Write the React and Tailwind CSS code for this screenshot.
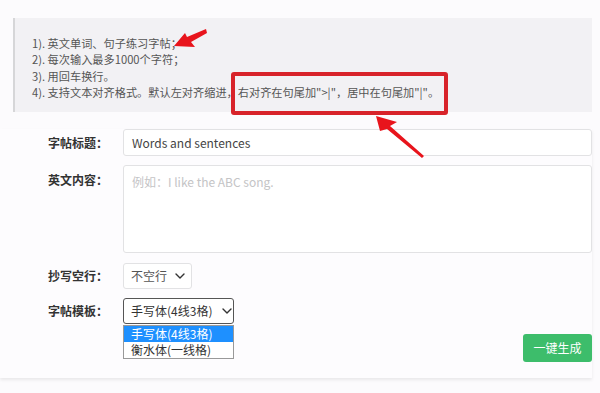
import React from "react";

const tips = [
  "1). 英文单词、句子练习字帖；",
  "2). 每次输入最多1000个字符；",
  "3). 用回车换行。",
];

function Chevron({ className }) {
  return (
    <svg className={className} width="10" height="6" viewBox="0 0 10 6" fill="none">
      <path d="M1 1l4 4 4-4" stroke="#333" strokeWidth="1.4" strokeLinecap="round" strokeLinejoin="round" />
    </svg>
  );
}

function Label({ children, top }) {
  return (
    <div className={"w-[108px] shrink-0 text-right text-[12px] font-bold text-[#333] " + (top ? "pt-[6px]" : "")}>
      {children}
    </div>
  );
}

export default function App() {
  return (
    <div className="relative w-[600px] h-[393px] overflow-hidden bg-[#fcfbfd] font-['Noto_Sans_CJK_SC',sans-serif]">
      <div className="pt-[18px] pl-[13px] pr-[8px]">
        <div className="h-[94px] border-l-2 border-[#d6d6d8] bg-[#f2f1f4] pl-[17px] pt-[17px] text-[11.2px] leading-[16.3px] text-[#555]">
          {tips.map((t) => (
            <div key={t}>{t}</div>
          ))}
          <div>
            4). 支持文本对齐格式。默认左对齐缩进，
            <span className="relative">
              右对齐在句尾加"&gt;|"，居中在句尾加"|"。
              <span className="absolute left-[-7px] right-[-9px] top-[-12px] bottom-[-15px] rounded-[3px] border-[4px] border-[#d8232a]" />
            </span>
          </div>
        </div>
      </div>

      <div className="mt-[17px] mr-[8px] pb-[16px] shadow-[0_2px_3px_rgba(0,0,0,0.08)] bg-[#fdfcfe]">
        <div className="flex flex-col gap-[9px]">
          <div className="flex items-center gap-[15px]">
            <Label>字帖标题：</Label>
            <div className="flex-1 h-[27px] rounded-[3px] border border-[#e2e2e4] bg-white px-[8px] flex items-center text-[12px] text-[#444]">
              Words and sentences
            </div>
          </div>
          <div className="flex gap-[15px]">
            <Label top>英文内容：</Label>
            <div className="flex-1 h-[88px] rounded-[3px] border border-[#e2e2e4] bg-white px-[8px] pt-[7px] text-[12px] text-[#c4c4c6]">
              例如：I like the ABC song.
            </div>
          </div>
          <div className="flex items-center gap-[15px] mt-[1px]">
            <Label>抄写空行：</Label>
            <div className="w-[69px] h-[26px] rounded-[3px] border border-[#e2e2e4] bg-white pl-[7px] flex items-center gap-[8px] text-[12px] text-[#555]">
              不空行
              <Chevron />
            </div>
          </div>
          <div className="flex items-center gap-[15px]">
            <Label>字帖模板：</Label>
            <div className="relative w-[111px] h-[26px] rounded-[3px] border border-[#555] bg-white pl-[7px] flex items-center gap-[10px] text-[12px] text-[#333]">
              手写体(4线3格)
              <Chevron />
              <div className="absolute left-[-1px] top-[26px] w-[111px] border border-[#999] bg-white text-[12px] leading-[16px]">
                <div className="bg-[#1e90ff] text-white pl-[7px]">手写体(4线3格)</div>
                <div className="text-[#333] pl-[7px]">衡水体(一线格)</div>
              </div>
            </div>
          </div>
        </div>
        <div className="flex justify-end mt-[10px]">
          <button className="w-[69px] h-[28px] rounded-[3px] bg-[#3dbd6b] text-white text-[12px]">
            一键生成
          </button>
        </div>
      </div>

      <svg className="absolute left-0 top-0 pointer-events-none" width="600" height="393">
        <polygon points="174,46 185,33 187,37 206,29 207,33 191,42 195,47" fill="#e8141c" />
        <polygon points="376,116 397,122 390,126 424,156 422,158 387,129 380,131" fill="#e8141c" />
      </svg>
    </div>
  );
}
